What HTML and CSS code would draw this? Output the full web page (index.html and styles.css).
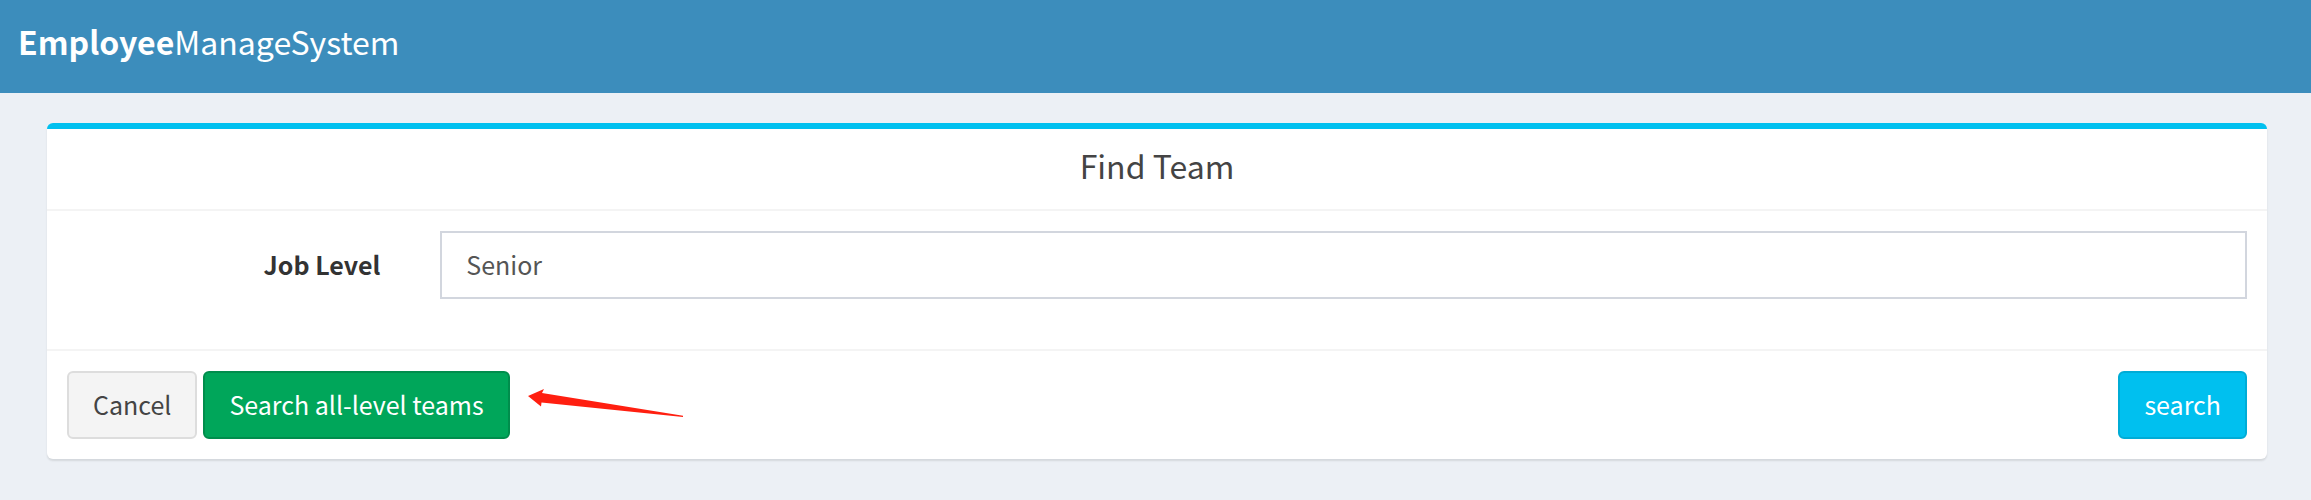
FILE: index.html
```html
<!DOCTYPE html>
<html lang="en">
<head>
<meta charset="utf-8">
<title>EmployeeManageSystem</title>
<link rel="stylesheet" href="styles.css">
</head>
<body>
<header class="main-header"><a class="logo" href="#"><b>Employee</b>ManageSystem</a></header>
<main class="content">
  <form class="box">
    <div class="box-header"><h1 class="box-title">Find Team</h1></div>
    <div class="box-body">
      <div class="form-group">
        <label class="control-label" for="level">Job Level</label>
        <div class="control"><input class="form-control" id="level" type="text" value="Senior"></div>
      </div>
    </div>
    <div class="box-footer">
      <button class="btn btn-default" type="button">Cancel</button>
      <button class="btn btn-success" type="button">Search all-level teams</button>
      <svg class="arrow" width="158" height="30" viewBox="0 0 158 30" aria-hidden="true"><path d="M0 9 16 2 14 6 155 28.700 155 30 13.500 15.500 13 19.500Z" fill="#ff1f10"/></svg>
      <button class="btn btn-info" type="submit">search</button>
    </div>
  </form>
</main>
</body>
</html>
```
FILE: styles.css
```css
* {
  box-sizing: border-box;
}

body {
  margin: 0;
  min-height: 100vh;
  background: #ecf0f5;
  color: #333;
  font-family: "Source Sans Pro", "Noto Sans CJK SC", sans-serif;
  font-size: 25px;
  line-height: 40px;
}

.main-header {
  padding: 16px 18px 27px;
  background: #3c8dbc;
}

.logo {
  display: block;
  color: #fff;
  font-size: 32px;
  line-height: 50px;
  text-decoration: none;
}

.content {
  padding: 30px 44px 41px 47px;
}

.box {
  border-top: 6px solid #00c0ef;
  border-radius: 6px;
  background: #fff;
  box-shadow: 0 2px 2px rgba(0, 0, 0, 0.1);
}

.box-header {
  padding: 16px 20px 24px;
  border-bottom: 2px solid #f4f4f4;
  text-align: center;
}

.box-title {
  margin: 0;
  color: #444;
  font-size: 32px;
  font-weight: 400;
  line-height: 40px;
}

.box-body {
  padding: 20px 20px 50px;
}

.form-group {
  display: grid;
  grid-template-columns: 1fr 5fr;
  margin: 0 -30px;
}

.control-label {
  padding: 13px 30px 15px;
  font-weight: 700;
  text-align: right;
}

.control {
  padding: 0 30px;
}

.form-control {
  display: block;
  width: 100%;
  height: 68px;
  padding: 11px 24px 13px;
  border: 2px solid #d2d6de;
  border-radius: 0;
  background: #fff;
  color: #555;
  font: inherit;
}

.box-footer {
  display: flex;
  align-items: center;
  gap: 6px;
  padding: 20px;
  border-top: 2px solid #f4f4f4;
}

.btn {
  padding: 11px 24px 13px;
  border: 2px solid;
  border-radius: 6px;
  color: #fff;
  font: inherit;
  white-space: nowrap;
}

.btn-default {
  border-color: #ddd;
  background: #f4f4f4;
  color: #444;
}

.btn-success {
  border-color: #008d4c;
  background: #00a65a;
}

.btn-info {
  margin-left: auto;
  border-color: #00acd6;
  background: #00c0ef;
}

.arrow {
  margin: 0 0 6px 12px;
}
```
